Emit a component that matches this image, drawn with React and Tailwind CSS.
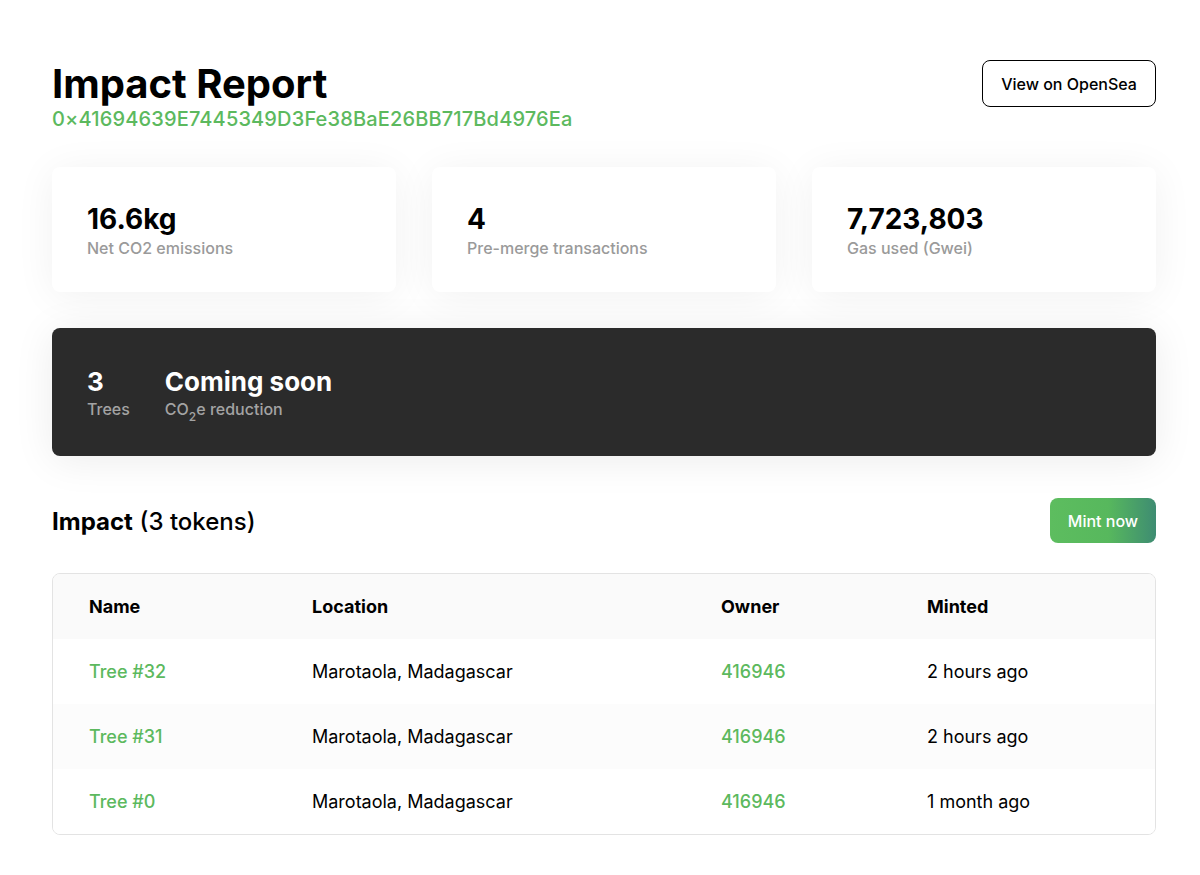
const stats = [
  { value: "16.6kg", label: "Net CO2 emissions" },
  { value: "4", label: "Pre-merge transactions" },
  { value: "7,723,803", label: "Gas used (Gwei)" },
];

const tokens = [
  { name: "Tree #32", location: "Marotaola, Madagascar", owner: "416946", minted: "2 hours ago" },
  { name: "Tree #31", location: "Marotaola, Madagascar", owner: "416946", minted: "2 hours ago" },
  { name: "Tree #0", location: "Marotaola, Madagascar", owner: "416946", minted: "1 month ago" },
];

const cols = "grid grid-cols-[223px_409px_206px_1fr] pl-[36px] items-center";

export default function App() {
  return (
    <div className="h-screen overflow-hidden w-full bg-white text-black font-['Inter',sans-serif] pl-[52px] pr-[44px] pt-[60px]">
      {/* Header */}
      <div className="flex justify-between items-start">
        <div>
          <h1 className="text-[40px] leading-[48px] font-bold">Impact Report</h1>
          <div className="text-[20px] leading-[26px] font-medium text-[#5cb95e] tracking-[0.15px] -mt-[2px]">
            0×41694639E7445349D3Fe38BaE26BB717Bd4976Ea
          </div>
        </div>
        <button className="h-[47px] w-[174px] rounded-lg border-[1.5px] border-black text-[16px] font-medium">
          View on OpenSea
        </button>
      </div>

      {/* Stats */}
      <div className="grid grid-cols-3 gap-[36px] mt-[35px]">
        {stats.map((s) => (
          <div
            key={s.label}
            className="h-[125px] rounded-lg bg-white shadow-[0_4px_40px_rgba(0,0,0,0.06)] px-[35px] pt-[1px] flex flex-col justify-center"
          >
            <div className="text-[28px] leading-[34px] font-bold">{s.value}</div>
            <div className="text-[16px] leading-[22px] font-medium text-[#9a9a9a] mt-[1px]">{s.label}</div>
          </div>
        ))}
      </div>

      {/* Dark banner */}
      <div className="mt-[36px] h-[128px] rounded-lg bg-[#2b2b2b] shadow-[0_4px_40px_rgba(0,0,0,0.08)] px-[35px] pt-[2px] flex items-center gap-[35px] text-white">
        <div>
          <div className="text-[26px] leading-[32px] font-bold">3</div>
          <div className="text-[16px] leading-[22px] font-medium text-[#a3a3a3]">Trees</div>
        </div>
        <div>
          <div className="text-[26px] leading-[32px] font-bold">Coming soon</div>
          <div className="text-[16px] leading-[22px] font-medium text-[#a3a3a3]">
            CO<sub className="text-[12px] align-[-3px]">2</sub>e reduction
          </div>
        </div>
      </div>

      {/* Impact heading */}
      <div className="mt-[42px] flex justify-between items-center">
        <h2 className="text-[24px] leading-[30px] pt-[2px]">
          <span className="font-bold">Impact</span> <span className="font-medium">(3 tokens)</span>
        </h2>
        <button className="h-[45px] w-[106px] rounded-lg text-white text-[16px] font-medium bg-[linear-gradient(90deg,#5dbd5f_0%,#57b85d_55%,#3e8c72_100%)]">
          Mint now
        </button>
      </div>

      {/* Table */}
      <div className="mt-[30px] rounded-lg border border-[#e3e3e3] overflow-hidden bg-white">
        <div className={`${cols} h-[65px] bg-[#fafafa] text-[18px] font-bold`}>
          <div>Name</div>
          <div>Location</div>
          <div>Owner</div>
          <div>Minted</div>
        </div>
        {tokens.map((t, i) => (
          <div key={t.name} className={`${cols} h-[65px] text-[18px] ${i === 1 ? "bg-[#fcfcfc]" : "bg-white"}`}>
            <div className="font-medium text-[#5cb95e]">{t.name}</div>
            <div>{t.location}</div>
            <div className="font-medium text-[#5cb95e]">{t.owner}</div>
            <div>{t.minted}</div>
          </div>
        ))}
      </div>
    </div>
  );
}
